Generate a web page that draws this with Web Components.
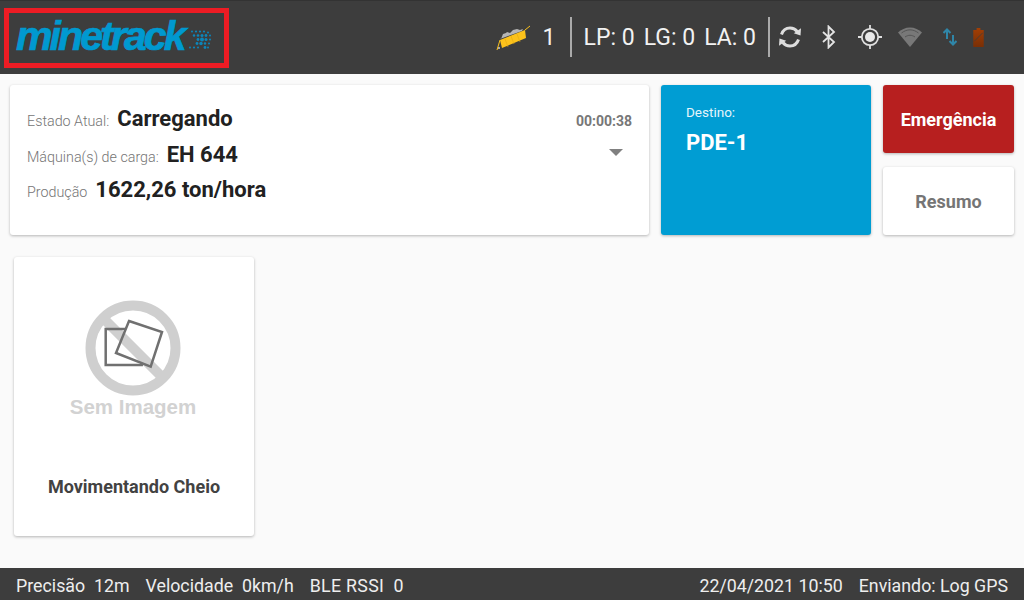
<!DOCTYPE html>
<html lang="pt"><head><meta charset="utf-8"><title>minetrack</title>
<style>
html,body{margin:0;padding:0;width:1024px;height:600px;overflow:hidden;background:#fafafa;font-family:Roboto,sans-serif}
body{display:flex;flex-direction:column}
</style></head><body>
<mt-app></mt-app>
<script>
function def(name, html){
  customElements.define(name, class extends HTMLElement{
    constructor(){super();this.attachShadow({mode:'open'}).innerHTML=html;}
  });
}
def('mt-logo',`<style>
:host{display:flex;align-items:center;box-sizing:border-box;width:225px;height:60px;border:5px solid #ed1c24;padding-left:7px;margin:1px 0 0 4px}
.t{font:italic 700 41px/1 "Liberation Sans",sans-serif;letter-spacing:-2.9px;color:#0099d0;-webkit-text-stroke:.7px #0099d0;position:relative;top:-2px}
svg{margin-left:3px;margin-top:2px;flex:none}
</style><span class="t">minetrack</span>
<svg width="24" height="23" viewBox="0 0 24 22" fill="#0c86ba">
<circle cx="5" cy="3" r="1"/><circle cx="9" cy="3" r="1.100"/><circle cx="13" cy="3" r="1.100"/><circle cx="17" cy="3" r="1.100"/><circle cx="21" cy="4" r="1"/>
<circle cx="7" cy="7" r="1.200"/><circle cx="11" cy="7" r="1.300"/><circle cx="15" cy="7" r="1.500"/><circle cx="19" cy="7" r="1.400"/><circle cx="23" cy="7" r="1"/>
<circle cx="11" cy="11" r="1.400"/><circle cx="15" cy="11" r="2"/><circle cx="19" cy="11" r="1.500"/><circle cx="23" cy="11" r="1"/>
<circle cx="10" cy="15" r="1.400"/><circle cx="14" cy="15" r="1.700"/><circle cx="18" cy="15" r="1.200"/><circle cx="22" cy="15" r="1"/>
<circle cx="3" cy="19" r="1"/><circle cx="7" cy="19" r="1.100"/><circle cx="11" cy="19" r="1"/><circle cx="18" cy="19" r="1.400"/><circle cx="21" cy="19" r="1"/></svg>`);
def('mt-divider',`<style>:host{display:block;width:2px;height:40px;background:#aaa;flex:none}</style>`);
def('mt-header',`<style>
:host{display:flex;align-items:center;height:74px;flex:none;background:#3d3d3d;border-top:1px solid #333;box-sizing:border-box;color:#f2f2f2;font:400 23px Roboto,sans-serif}
.r{margin-left:auto;display:flex;align-items:center;height:40px;margin-bottom:1px}
svg{display:block;flex:none}
.n{margin-left:11px;width:13px}
.lp{margin:0 12px 0 12px;display:flex;gap:9px}
.lp span{white-space:pre}
</style>
<mt-logo></mt-logo>
<div class="r">
<svg width="36" height="34" viewBox="0 0 36 34"><path d="M5 19 7 14l3-1 1-1 3 1 3-3 4-1 3 1 3-1-1 2-22 8z" fill="#b5b5b5"/><path d="M4 20 29 10l1 8-24 10z" fill="#fcc21b"/><path d="M1 30 4 20M29 10 34 6" stroke="#fcc21b" stroke-width="1" fill="none"/><path d="M9 19l3 8M15 16l3 8M21 14l3 8" stroke="#e0a810" stroke-width=".6"/><circle cx="3" cy="28" r="1" fill="#ccc"/></svg>
<span class="n">1</span>
<mt-divider style="margin-left:14px"></mt-divider>
<div class="lp"><span>LP: 0</span><span>LG: 0</span><span>LA: 0</span></div>
<mt-divider></mt-divider>
<svg style="margin-left:8px" width="24" height="24" viewBox="0 0 24 24" fill="none"><path d="M3.500 9.500C5 5 8.500 3 12 3c3 0 5.500 1.300 7.200 3.500" stroke="#ddd" stroke-width="3"/><path d="M23 3.200 22.500 10.500 15.800 8.200z" fill="#ddd"/><path d="M20.500 14.500C19 19 15.500 21 12 21c-3 0-5.500-1.300-7.200-3.500" stroke="#ddd" stroke-width="3"/><path d="M1 20.800 1.500 13.500l6.700 2.300z" fill="#ddd"/></svg>
<svg style="margin-left:20px" width="14" height="24" viewBox="0 0 14 24" fill="none" stroke="#e4e4e4" stroke-width="1.800"><path d="M1 7 12 17 6.500 22.500V1.500L12 7 1 17"/></svg>
<svg style="margin-left:22px" width="24" height="24" viewBox="0 0 24 24"><circle cx="12" cy="12" r="8.200" fill="none" stroke="#e0e0e0" stroke-width="1.800"/><circle cx="12" cy="12" r="5" fill="#e8e8e8"/><path d="M12 0v4M12 20v4M0 12h4M20 12h4" stroke="#e0e0e0" stroke-width="1.800"/></svg>
<svg style="margin-left:16px" width="24" height="20" viewBox="0 0 24 20"><path d="M12 20 0 5.500C3 2.500 7.500.500 12 .500s9 2 12 5z" fill="#787878"/><path d="M3.500 6C9 1.800 15 1.800 20.500 6M7 10c3.300-2.300 6.700-2.300 10 0" stroke="#555" stroke-width="1" fill="none"/></svg>
<svg style="margin-left:21px" width="14" height="18" viewBox="0 0 14 18" fill="none" stroke="#2f86a8" stroke-width="2"><path d="M4 11V1.500M.5 5 4 1.500 7.500 5M10 7v9.500M6.500 13 10 16.500 13.500 13"/></svg>
<svg style="margin-left:16px;margin-right:40px" width="11" height="19" viewBox="0 0 11 20"><defs><linearGradient id="b" x1="0" y1="0" x2="0" y2="1"><stop offset="0" stop-color="#a33f05"/><stop offset="1" stop-color="#7a2f05"/></linearGradient></defs><path d="M3.500 0h4v2H11v18H0V2h3.500z" fill="url(#b)"/><path d="M1 14 10 5" stroke="#3d3d3d" stroke-width=".8"/></svg>
</div>`);
def('mt-field',`<style>
:host{display:flex;align-items:baseline;gap:8px;height:35.500px;white-space:nowrap}
.l{font:300 14.300px Roboto,sans-serif;color:#757575}
.v{font:700 22px Roboto,sans-serif;color:#212121}
</style><span class="l"><slot name="label"></slot></span><span class="v"><slot></slot></span>`);
def('mt-state',`<style>
:host{display:block;position:relative;box-sizing:border-box;width:639px;height:150px;background:#fff;border-radius:3px;box-shadow:0 1px 3px rgba(0,0,0,.28);padding:21px 17px 0}
.time{position:absolute;right:17px;top:28px;font:700 14px Roboto,sans-serif;color:#777}
.arrow{position:absolute;right:26px;top:64px;width:0;height:0;border:7px solid transparent;border-top-color:#808080;border-bottom:0}
</style><slot></slot><span class="time">00:00:38</span><span class="arrow"></span>`);
def('mt-dest',`<style>
:host{display:block;box-sizing:border-box;width:210px;height:150px;background:#009dd3;border-radius:3px;box-shadow:0 1px 3px rgba(0,0,0,.28);padding:19px 25px;color:#fff}
.l{font:400 13.500px/16px Roboto,sans-serif;color:#e6f5fb}
.v{font:700 22px/25px Roboto,sans-serif;margin-top:10px}
</style><div class="l">Destino:</div><div class="v">PDE-1</div>`);
def('mt-button',`<style>
:host{display:flex;align-items:center;justify-content:center;width:131px;height:68px;border-radius:3px;background:#fff;color:#757575;box-shadow:0 1px 3px rgba(0,0,0,.28);font:700 18px Roboto,sans-serif}
:host([danger]){background:#b71f1f;color:#fff}
</style><slot></slot>`);
def('mt-tile',`<style>
:host{display:flex;flex-direction:column;align-items:center;box-sizing:border-box;width:240px;height:279px;background:#fff;border-radius:3px;box-shadow:0 1px 3px rgba(0,0,0,.28);padding-top:43px}
svg{display:block;margin-right:3px;flex:none}
.s{font:700 20.500px/22px "Liberation Sans",sans-serif;color:#d2d2d2;margin-right:2px}
.c{font:700 18px/20px Roboto,sans-serif;color:#424242;margin-top:59px}
</style>
<svg width="96" height="96" viewBox="0 0 96 96"><circle cx="48" cy="48" r="42.500" fill="#fff" stroke="#cfcfcf" stroke-width="10"/><path d="M18 18 78 78" stroke="#cfcfcf" stroke-width="10"/><path d="M40.700 29H20.700V65H56.700V63" fill="none" stroke="#707070" stroke-width="2.500"/><path d="M44 21 77 32 65.700 66.700 31 53z" fill="none" stroke="#707070" stroke-width="2.500"/></svg>
<div class="s">Sem Imagem</div><div class="c"><slot></slot></div>`);
def('mt-footer',`<style>
:host{display:flex;align-items:center;justify-content:space-between;height:32px;flex:none;background:#3d3d3d;color:#eee;font:400 17.800px Roboto,sans-serif;padding:2px 16px 0;box-sizing:border-box;white-space:pre}
div{display:flex;gap:16px}
.w{letter-spacing:.3px}
</style><div><span>Precisão  12m</span><span>Velocidade  0km/h</span><span class="w">BLE RSSI  0</span></div><div><span>22/04/2021 10:50</span><span>Enviando: Log GPS</span></div>`);
def('mt-app',`<style>
:host{display:flex;flex-direction:column;width:1024px;height:600px}
main{flex:1;display:flex;flex-direction:column;padding:11px 10px 0;box-sizing:border-box}
.top{display:flex;gap:12px}
.btns{display:flex;flex-direction:column;justify-content:space-between}
.grid{display:flex;margin:22px 0 0 4px}
</style>
<mt-header></mt-header>
<main><div class="top">
<mt-state>
<mt-field><span slot="label">Estado Atual:</span>Carregando</mt-field>
<mt-field><span slot="label">Máquina(s) de carga:</span>EH 644</mt-field>
<mt-field><span slot="label">Produção</span>1622,26 ton/hora</mt-field>
</mt-state>
<mt-dest></mt-dest>
<div class="btns"><mt-button danger>Emergência</mt-button><mt-button>Resumo</mt-button></div>
</div>
<div class="grid"><mt-tile>Movimentando Cheio</mt-tile></div></main>
<mt-footer></mt-footer>`);
</script></body></html>
